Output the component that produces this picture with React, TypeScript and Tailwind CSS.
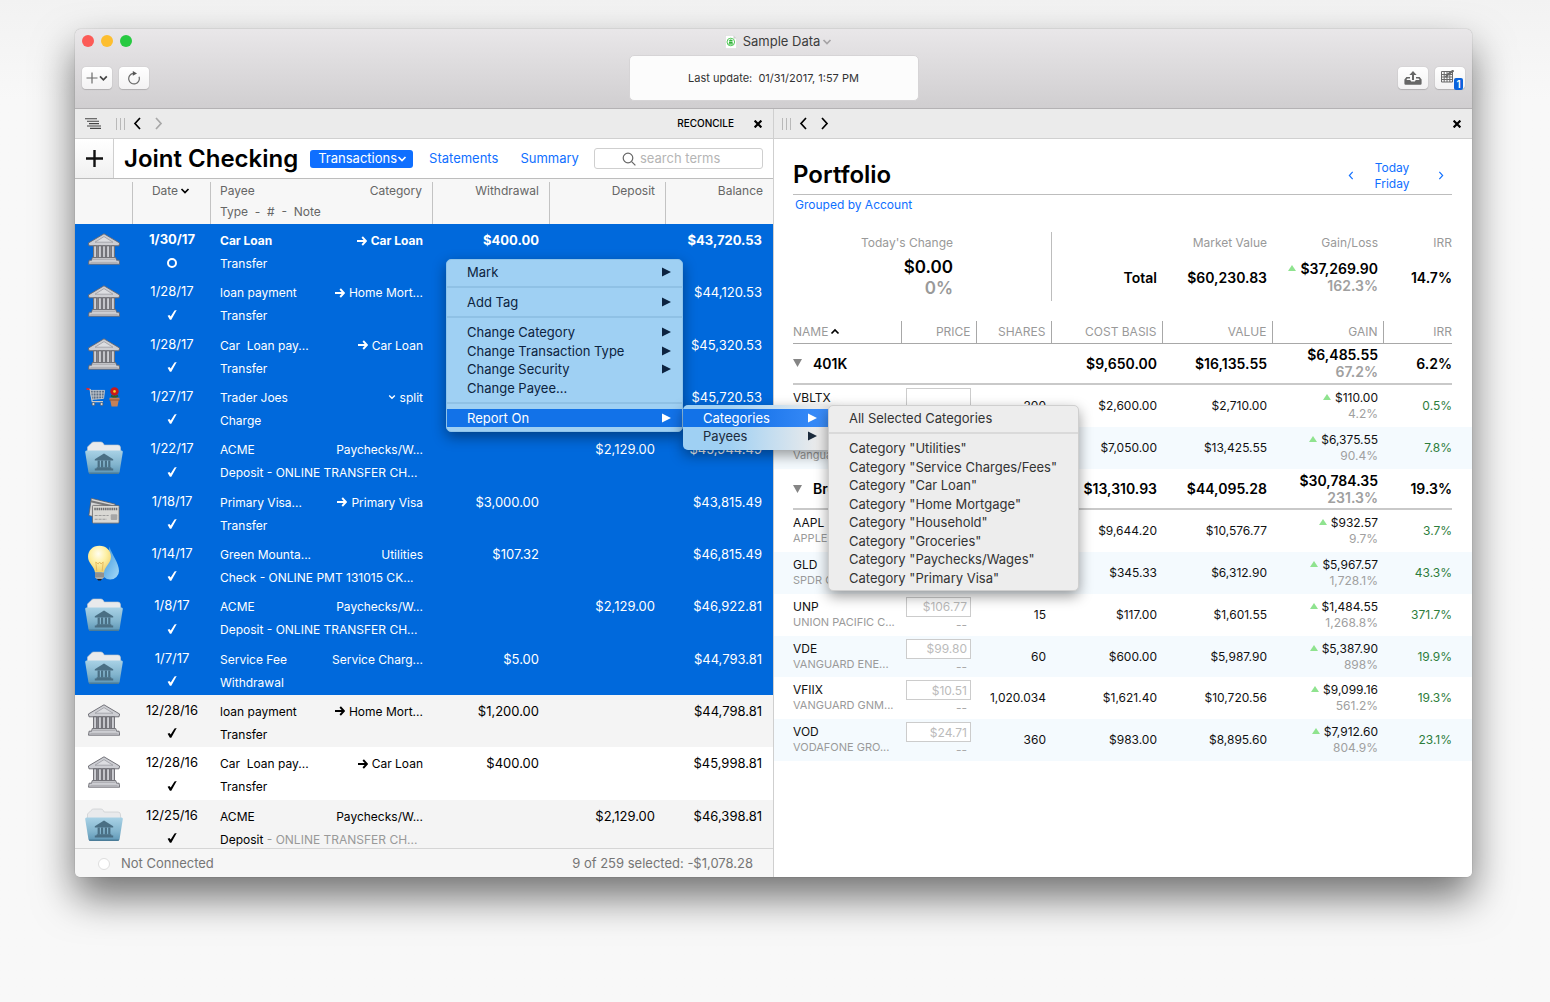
import type { ReactNode } from 'react';
import { clsx } from 'clsx';

type IconKind = 'bank' | 'shopping' | 'folder' | 'cards' | 'utility';

interface Transaction {
  icon: IconKind;
  date: string;
  open?: boolean;
  payee: string;
  category: string;
  link?: 'arrow' | 'split';
  type: string;
  note?: string;
  withdrawal?: string;
  deposit?: string;
  balance: string;
}

interface Holding {
  symbol: string;
  name: string;
  price: string;
  shares: string;
  cost: string;
  value: string;
  gain: string;
  percent: string;
  irr: string;
}

interface Group {
  name: string;
  cost: string;
  value: string;
  gain: string;
  percent: string;
  irr: string;
  holdings: Holding[];
}

const SELECTED_COUNT = 9;

const transactions: Transaction[] = [
  { icon: 'bank', date: '1/30/17', open: true, payee: 'Car Loan', category: 'Car Loan', link: 'arrow', type: 'Transfer', withdrawal: '$400.00', balance: '$43,720.53' },
  { icon: 'bank', date: '1/28/17', payee: 'loan payment', category: 'Home Mort...', link: 'arrow', type: 'Transfer', balance: '$44,120.53' },
  { icon: 'bank', date: '1/28/17', payee: 'Car  Loan pay...', category: 'Car Loan', link: 'arrow', type: 'Transfer', balance: '$45,320.53' },
  { icon: 'shopping', date: '1/27/17', payee: 'Trader Joes', category: 'split', link: 'split', type: 'Charge', balance: '$45,720.53' },
  { icon: 'folder', date: '1/22/17', payee: 'ACME', category: 'Paychecks/W...', type: 'Deposit', note: 'ONLINE TRANSFER CH...', deposit: '$2,129.00', balance: '$45,944.49' },
  { icon: 'cards', date: '1/18/17', payee: 'Primary Visa...', category: 'Primary Visa', link: 'arrow', type: 'Transfer', withdrawal: '$3,000.00', balance: '$43,815.49' },
  { icon: 'utility', date: '1/14/17', payee: 'Green Mounta...', category: 'Utilities', type: 'Check', note: 'ONLINE PMT 131015 CK...', withdrawal: '$107.32', balance: '$46,815.49' },
  { icon: 'folder', date: '1/8/17', payee: 'ACME', category: 'Paychecks/W...', type: 'Deposit', note: 'ONLINE TRANSFER CH...', deposit: '$2,129.00', balance: '$46,922.81' },
  { icon: 'folder', date: '1/7/17', payee: 'Service Fee', category: 'Service Charg...', type: 'Withdrawal', withdrawal: '$5.00', balance: '$44,793.81' },
  { icon: 'bank', date: '12/28/16', payee: 'loan payment', category: 'Home Mort...', link: 'arrow', type: 'Transfer', withdrawal: '$1,200.00', balance: '$44,798.81' },
  { icon: 'bank', date: '12/28/16', payee: 'Car  Loan pay...', category: 'Car Loan', link: 'arrow', type: 'Transfer', withdrawal: '$400.00', balance: '$45,998.81' },
  { icon: 'folder', date: '12/25/16', payee: 'ACME', category: 'Paychecks/W...', type: 'Deposit', note: 'ONLINE TRANSFER CH...', deposit: '$2,129.00', balance: '$46,398.81' },
];

const groups: Group[] = [
  {
    name: '401K', cost: '$9,650.00', value: '$16,135.55', gain: '$6,485.55', percent: '67.2%', irr: '6.2%',
    holdings: [
      { symbol: 'VBLTX', name: '', price: '', shares: '200', cost: '$2,600.00', value: '$2,710.00', gain: '$110.00', percent: '4.2%', irr: '0.5%' },
      { symbol: '', name: 'Vanguard', price: '', shares: '', cost: '$7,050.00', value: '$13,425.55', gain: '$6,375.55', percent: '90.4%', irr: '7.8%' },
    ],
  },
  {
    name: 'Brokerage', cost: '$13,310.93', value: '$44,095.28', gain: '$30,784.35', percent: '231.3%', irr: '19.3%',
    holdings: [
      { symbol: 'AAPL', name: 'APPLE', price: '', shares: '', cost: '$9,644.20', value: '$10,576.77', gain: '$932.57', percent: '9.7%', irr: '3.7%' },
      { symbol: 'GLD', name: 'SPDR G', price: '', shares: '', cost: '$345.33', value: '$6,312.90', gain: '$5,967.57', percent: '1,728.1%', irr: '43.3%' },
      { symbol: 'UNP', name: 'UNION PACIFIC C...', price: '$106.77', shares: '15', cost: '$117.00', value: '$1,601.55', gain: '$1,484.55', percent: '1,268.8%', irr: '371.7%' },
      { symbol: 'VDE', name: 'VANGUARD ENE...', price: '$99.80', shares: '60', cost: '$600.00', value: '$5,987.90', gain: '$5,387.90', percent: '898%', irr: '19.9%' },
      { symbol: 'VFIIX', name: 'VANGUARD GNM...', price: '$10.51', shares: '1,020.034', cost: '$1,621.40', value: '$10,720.56', gain: '$9,099.16', percent: '561.2%', irr: '19.3%' },
      { symbol: 'VOD', name: 'VODAFONE GRO...', price: '$24.71', shares: '360', cost: '$983.00', value: '$8,895.60', gain: '$7,912.60', percent: '804.9%', irr: '23.1%' },
    ],
  },
];

const reportCategories = [
  'Utilities', 'Service Charges/Fees', 'Car Loan', 'Home Mortgage',
  'Household', 'Groceries', 'Paychecks/Wages', 'Primary Visa',
];

/* ---------- icons ---------- */

function Chevron({ dir, className }: { dir: 'left' | 'right' | 'down' | 'up'; className?: string }) {
  const points = {
    left: '7,1 2,6.5 7,12',
    right: '2,1 7,6.5 2,12',
    down: '1.5,2 5,5.5 8.5,2',
    up: '1.5,5.5 5,2 8.5,5.5',
  }[dir];
  const vertical = dir === 'down' || dir === 'up';
  return (
    <svg viewBox={vertical ? '0 0 10 8' : '0 0 9 13'} className={className} fill="none" stroke="currentColor" strokeWidth="1.7">
      <polyline points={points} />
    </svg>
  );
}

function CloseIcon() {
  return (
    <svg viewBox="0 0 8 8" className="size-2" stroke="#000" strokeWidth="2.2">
      <path d="M0.6 0.6 7.4 7.4M7.4 0.6 0.6 7.4" />
    </svg>
  );
}

function Grip() {
  return (
    <svg viewBox="0 0 10 12" className="h-3 w-2.5" stroke="#b9b9b9" strokeWidth="1">
      <path d="M0.5 0v12M4.5 0v12M8.5 0v12" />
    </svg>
  );
}

function ArrowIcon() {
  return (
    <svg viewBox="0 0 10 10" className="h-2.5 w-2.5" fill="none" stroke="currentColor" strokeWidth="1.9">
      <path d="M0 5h8.6M5.2 1 9 5 5.2 9" />
    </svg>
  );
}

function CheckIcon() {
  return (
    <svg viewBox="0 0 10 10" className="size-2.5" fill="currentColor">
      <path d="M0.6 5.8 2.4 4.9 3.7 6.5 7.5 0.4 9.7 0 4.3 9.8 2.9 9.8Z" />
    </svg>
  );
}

function RingIcon() {
  return (
    <svg viewBox="0 0 10 10" className="size-2.5" fill="none" stroke="currentColor" strokeWidth="2">
      <circle cx="5" cy="5" r="4" />
    </svg>
  );
}

function BankIcon() {
  return (
    <svg viewBox="0 0 32 32" className="size-8">
      <path d="M5 12h22v13H5z" fill="#8b8c92" />
      <g fill="#cdced3" stroke="#66676d" strokeWidth="0.9" strokeLinejoin="round">
        <path d="M16 0.8 31.6 10 31 12.8H1L0.4 10Z" />
        <path d="M5.6 12.8h3v12h-3zM10.4 12.8h3v12h-3zM14.6 12.8h2.8v12h-2.8zM18.6 12.8h3v12h-3zM23.4 12.8h3v12h-3z" />
        <path d="M4.2 24.6h23.6l0.7 2.6h2.6l0.6 4H0.5l0.6-4h2.6z" />
      </g>
      <path d="M16 3.6 25 9.2H7Z" fill="#dcdde1" stroke="#9b9ca2" strokeWidth="0.8" />
      <path d="M2.4 29.4h27.2M5 26.4h22" stroke="#a4a5ab" strokeWidth="0.8" />
    </svg>
  );
}

function FolderIcon() {
  return (
    <svg viewBox="0 0 38 34" className="h-[34px] w-[38px]">
      <defs>
        <linearGradient id="folder-front" x1="0" y1="0" x2="0" y2="1">
          <stop offset="0" stopColor="#a9d2e6" />
          <stop offset="0.6" stopColor="#82b4cd" />
          <stop offset="1" stopColor="#5d96b5" />
        </linearGradient>
      </defs>
      <path d="M2.5 14V6L6 2.5Q7 1 8.6 1H16q1.6 0 2.4 1.6L19.2 4H33q2 0 2.4 2L36 14Z" fill="#e9eaec" stroke="#c3c6ca" strokeWidth="0.6" />
      <path d="M1.6 9.4H36.4Q38 9.4 37.8 11L34.6 31Q34.2 33 32.2 33H5.8Q3.8 33 3.4 31L0.2 11Q0 9.4 1.6 9.4Z" fill="url(#folder-front)" />
      <path d="M3.6 31.4h30.8Q34 33 32.2 33H5.8Q4 33 3.6 31.4Z" fill="#4b7c98" />
      <g fill="#4a6f84">
        <path d="M19 12.4 28.2 18.2V19.6H9.8V18.2Z" />
        <path d="M12.6 19.6h2.2v7h-2.2zM16 19.6h2.2v7H16zM19.8 19.6H22v7h-2.2zM23.2 19.6h2.2v7h-2.2z" />
        <path d="M11.8 26.2h14.4l0.4 1.4h1.6v1.8H9.8v-1.8h1.6z" />
      </g>
    </svg>
  );
}

function CardsIcon() {
  return (
    <svg viewBox="0 0 34 30" className="h-7 w-8">
      <g stroke="#58595c" strokeWidth="0.8">
        <path d="M3.4 1.4 29 7.6 24.4 26 0.8 19.8Z" fill="#d8d8d8" />
        <path d="M2.8 4.6 28.4 10.4" stroke="#77787a" strokeWidth="2.2" />
        <rect x="4.6" y="9" width="28.6" height="19" rx="1" fill="#d9d8d4" />
      </g>
      <path d="M6.6 12.8H31.2" stroke="#6e6f72" strokeWidth="2.6" strokeDasharray="1.6 0.7" />
      <path d="M7 19.8h15M7 23.8h13" stroke="#9c9c9c" strokeWidth="1.2" strokeDasharray="3.2 1" />
      <rect x="24.2" y="18.6" width="7" height="6" rx="1" fill="#a6a6a6" />
    </svg>
  );
}

function UtilityIcon() {
  return (
    <svg viewBox="0 0 34 36" className="h-9 w-[34px]">
      <defs>
        <radialGradient id="bulb" cx="0.45" cy="0.3" r="0.7">
          <stop offset="0" stopColor="#fffdf0" />
          <stop offset="0.5" stopColor="#fdf0a4" />
          <stop offset="1" stopColor="#f0cf6a" />
        </radialGradient>
        <linearGradient id="drop" x1="0" y1="0" x2="1" y2="1">
          <stop offset="0" stopColor="#2f8edb" />
          <stop offset="1" stopColor="#a9dcf8" />
        </linearGradient>
      </defs>
      <path d="M22.4 1.4C25 10 32 18 32 26A8.8 8.6 0 0 1 14.4 26C14.4 18 22 12 22.4 1.4Z" fill="url(#drop)" />
      <path d="M12.4 0.8C5.6 0.8 1 5.6 1 11.8 1 18.4 6.8 20.8 8 27.4H17C18.2 20.8 24 18.4 24 11.8 24 5.6 19.2 0.8 12.4 0.8Z" fill="url(#bulb)" />
      <path d="M9.8 26 8.8 17l2.4 2 1.4-2 1.4 2 2.2-2-1 9" fill="none" stroke="#e2b75c" strokeWidth="0.9" />
      <path d="M8 27.4h9v5.2l-2 1.6h-5l-2-1.6z" fill="#a9a9a6" />
      <path d="M8 29h9M8 31h9" stroke="#6f6f6c" strokeWidth="0.8" />
      <path d="M10 34h5l-1.2 1.4h-2.6z" fill="#1c1c1c" />
    </svg>
  );
}

function ShoppingIcon() {
  return (
    <svg viewBox="0 0 36 20" className="h-5 w-9">
      <path d="M1.4 2 4.2 2.6 6.2 14.6H17" fill="none" stroke="#c9c9c9" strokeWidth="1.2" />
      <path d="M4.4 3.4H18.6L17.6 11.4 5.8 12.4Z" fill="#5d6f86" stroke="#d2d2d2" strokeWidth="0.8" />
      <path d="M7.2 3.4v9M10 3.4v9M12.8 3.4v8.4M15.6 3.4v8.4M4.8 6h13.4M5.4 9h12.4" stroke="#d9dadb" strokeWidth="0.7" />
      <path d="M0.4 1.6 3.6 2.4" stroke="#e0262b" strokeWidth="1.8" />
      <circle cx="7.4" cy="17" r="1.5" fill="#d5d5d5" stroke="#4c4c4c" strokeWidth="0.6" />
      <circle cx="15.6" cy="17" r="1.5" fill="#d5d5d5" stroke="#4c4c4c" strokeWidth="0.6" />
      <path d="M28.5 7v5M25 8.6l3.5 2 3.5-2" stroke="#2c5f2a" strokeWidth="1.8" fill="none" />
      <circle cx="28.5" cy="4.4" r="4.2" fill="#c9191a" />
      <circle cx="28.5" cy="4.4" r="1.3" fill="#f7cf2e" />
      <path d="M23.5 10.8h10v2.4h-0.8l-1.2 6.2h-6l-1.2-6.2h-0.8z" fill="#c58157" />
      <path d="M23.5 13h10" stroke="#8d4a25" strokeWidth="0.8" />
    </svg>
  );
}

function RowIcon({ kind }: { kind: IconKind }) {
  if (kind === 'folder') return <FolderIcon />;
  if (kind === 'cards') return <CardsIcon />;
  if (kind === 'utility') return <UtilityIcon />;
  if (kind === 'shopping') return <ShoppingIcon />;
  return <BankIcon />;
}

/* ---------- title bar ---------- */

function ToolButton({ label, children }: { label: string; children: ReactNode }) {
  return (
    <button
      type="button"
      aria-label={label}
      className="flex h-[22px] w-[30px] items-center justify-center rounded-[4px] bg-gradient-to-b from-white to-[#f3f2f3] text-[#6b6b6b] shadow-[0_0_1px_rgba(0,0,0,0.25),0_1px_1px_rgba(0,0,0,0.15)]"
    >
      {children}
    </button>
  );
}

function TitleBar() {
  return (
    <header className="grid h-20 shrink-0 grid-cols-[1fr_290px_1fr] rounded-t-[6px] border-b border-[#b4b2b4] bg-gradient-to-b from-[#e9e7e9] to-[#d0ced0]">
      <div className="flex flex-col px-[7px]">
        <div className="flex h-6 items-center gap-[7px]">
          <span className="size-3 rounded-full bg-[#fc5b57]" />
          <span className="size-3 rounded-full bg-[#fdbe2f]" />
          <span className="size-3 rounded-full bg-[#27ca41]" />
        </div>
        <div className="flex gap-[7px] pt-[14px]">
          <ToolButton label="Add">
            <svg viewBox="0 0 22 12" className="h-3 w-[22px]" fill="none" stroke="currentColor">
              <path d="M0.5 6h11M6 0.5v11" strokeWidth="1.2" />
              <path d="M14 4.4 17.4 7.8 20.8 4.4" stroke="#444" strokeWidth="1.7" />
            </svg>
          </ToolButton>
          <ToolButton label="Refresh">
            <svg viewBox="0 0 14 14" className="size-[14px]" fill="none" stroke="currentColor" strokeWidth="1.2">
              <path d="M12 5.8A5.3 5.3 0 1 1 6.2 2.4" />
              <path d="M5.8 0v4.8L10 2.4Z" fill="#555" stroke="none" />
            </svg>
          </ToolButton>
        </div>
      </div>

      <div className="flex flex-col">
        <div className="flex h-[26px] items-center justify-center gap-1.5 pl-2.5 text-[13px] text-[#3c3c3c]">
          <svg viewBox="0 0 12 14" className="h-[14px] w-3">
            <path d="M0.5 0.5H8.5L11.5 3.5V13.5H0.5Z" fill="#fff" stroke="#dcdcdc" strokeWidth="0.6" />
            <path d="M8.5 0.5v3h3" fill="#ccc" />
            <circle cx="5.8" cy="7" r="3.8" fill="none" stroke="#55c95a" />
            <path d="M5.8 4.2 8.2 6H3.4ZM4 6.4h3.6v1.8H4zM3.4 8.4h4.8v1H3.4z" fill="#2fb437" />
          </svg>
          <span>Sample Data</span>
          <Chevron dir="down" className="-ml-1 h-2 w-2.5 text-[#a5a3a5]" />
        </div>
        <p className="flex h-[46px] items-center justify-center rounded-[5px] border border-[#d6d4d6] bg-[#fcfcfc] text-[11px] text-[#333]">
          Last update:&nbsp; 01/31/2017, 1:57 PM
        </p>
      </div>

      <div className="flex items-start justify-end gap-[7px] pt-[38px] pr-[7px]">
        <ToolButton label="Share">
          <svg viewBox="0 0 18 14" className="h-[14px] w-[18px]" fill="#666">
            <path d="M0.4 8.6 2.4 6H6v1.4H3.4L2.4 9h3.8l1 1.4h3.6l1-1.4h3.8l-1-1.6H12V6h3.6l2 2.6v4q0 1.2-1.2 1.2H1.6Q0.4 13.8 0.4 12.6Z" />
            <path d="M8 9V4H5.4L9 0l3.6 4H10v5z" />
          </svg>
        </ToolButton>
        <ToolButton label="Review 1 item">
          <span className="flex items-end pl-1">
            <svg viewBox="0 0 13 13" className="mb-[3px] size-[13px]" fill="none" stroke="#6a6a6a">
              <path d="M0.5 1.5h11v10.5H0.5zM0.5 4.5h11M0.5 7h11M0.5 9.5h11M3.2 1.5V12M6 1.5V12M8.8 1.5V12" strokeWidth="1" />
              <path d="M4.6 7.4 7 4.4 12.6 0.4" strokeWidth="2.2" />
            </svg>
            <span className="-mb-1 flex h-3 w-[9px] items-center justify-center rounded-[2px] bg-[#0a62dc] text-[10px] font-semibold text-white">1</span>
          </span>
        </ToolButton>
      </div>
    </header>
  );
}

/* ---------- register ---------- */

function TransactionRow({ tx, index }: { tx: Transaction; index: number }) {
  const selected = index < SELECTED_COUNT;
  const amount = 'align-top pt-[5px] pr-[11px] text-right leading-[23px]';
  return (
    <tr
      className={clsx(
        selected && 'bg-[#0069dc] text-white',
        !selected && (index % 2 ? 'bg-[#f4f4f4]' : 'bg-white'),
        index === 0 && 'font-bold',
      )}
    >
      <td className="p-0 align-top">
        <div className={clsx('flex h-[50px] justify-center', tx.icon === 'shopping' ? 'pt-1.5' : 'items-center')}>
          <RowIcon kind={tx.icon} />
        </div>
      </td>
      <td className="pt-1 text-center align-top leading-[23px]">
        {tx.date}
        <div className="flex h-[23px] items-center justify-center">{tx.open ? <RingIcon /> : <CheckIcon />}</div>
      </td>
      <td className="pt-[5px] pr-2.5 pl-[9px] align-top text-[12px] leading-[23px]">
        <div className="flex justify-between whitespace-pre">
          <span>{tx.payee}</span>
          <span className="flex items-center gap-1">
            {tx.link === 'arrow' && <ArrowIcon />}
            {tx.link === 'split' && <Chevron dir="down" className="h-2 w-2" />}
            {tx.category}
          </span>
        </div>
        <div className="font-normal whitespace-nowrap">
          {tx.type}
          {tx.note && <span className={clsx(!selected && 'text-[#999]')}> - {tx.note}</span>}
        </div>
      </td>
      <td className={amount}>{tx.withdrawal}</td>
      <td className={amount}>{tx.deposit}</td>
      <td className={amount}>{tx.balance}</td>
    </tr>
  );
}

function HeadCell({ children, className }: { children?: ReactNode; className?: string }) {
  return (
    <th scope="col" className="h-[45px] bg-[#f7f7f7] p-0 pt-[3px] font-normal">
      <div className={clsx('h-[42px] border-[#c3c3c3] pr-2.5 pl-[9px] leading-[17px]', className)}>{children}</div>
    </th>
  );
}

function Register() {
  return (
    <section className="flex min-w-0 flex-1 flex-col border-r border-[#cfcfcf]">
      <div className="flex h-[30px] shrink-0 items-center border-b border-[#d0d0d0] bg-[#ebebeb] pr-[11px] pl-2.5">
        <button type="button" aria-label="Toggle sidebar">
          <svg viewBox="0 0 16 11" className="h-[11px] w-4" stroke="#444" strokeWidth="1.1">
            <path d="M0 0.8h12M2 3.2h12M4 5.6h10M2 8h14M5 10.4h11" />
          </svg>
        </button>
        <span className="pl-[15px]"><Grip /></span>
        <button type="button" aria-label="Back" className="pl-[7px]"><Chevron dir="left" className="h-[13px] w-[9px] text-black" /></button>
        <button type="button" aria-label="Forward" className="pl-3"><Chevron dir="right" className="h-[13px] w-[9px] text-[#a8a8a8]" /></button>
        <button type="button" className="ml-auto text-[10px] font-medium text-black">RECONCILE</button>
        <button type="button" aria-label="Close pane" className="pl-5"><CloseIcon /></button>
      </div>

      <div className="flex h-10 shrink-0 items-center border-b border-[#bdbdbd] bg-white pr-2.5">
        <button type="button" aria-label="New transaction" className="flex h-full w-[39px] items-center justify-center border-r border-[#cfcfcf] bg-gradient-to-b from-white to-[#f0f0f0]">
          <svg viewBox="0 0 17 17" className="size-[17px]" stroke="#111" strokeWidth="2.4">
            <path d="M0 8.5h17M8.5 0v17" />
          </svg>
        </button>
        <h1 className="pl-2.5 text-[24px] font-semibold text-black">Joint Checking</h1>
        <nav className="flex flex-1 items-center text-[#0f6fff]">
          <button type="button" className="ml-3 flex h-[18px] items-center rounded-[3px] bg-[#0f6fff] pr-1.5 pl-2 text-white">
            Transactions
            <Chevron dir="down" className="h-2 w-2.5" />
          </button>
          <a href="#statements" className="pl-4">Statements</a>
          <a href="#summary" className="pl-[22px]">Summary</a>
        </nav>
        <label className="flex h-[21px] w-[169px] items-center gap-1 rounded-[3px] border border-[#cfcfcf] pl-[27px]">
          <svg viewBox="0 0 14 14" className="size-[14px] shrink-0" fill="none" stroke="#666" strokeWidth="1.2">
            <circle cx="6" cy="6" r="4.8" />
            <path d="M9.6 9.6 13.4 13.4" />
          </svg>
          <input type="search" aria-label="Search" placeholder="search terms" className="w-full min-w-0 bg-transparent outline-none placeholder:text-[#b5b5b5]" />
        </label>
      </div>

      <div className="min-h-0 flex-1 overflow-hidden">
        <table className="h-[673px] w-full table-fixed text-black">
          <colgroup>
            <col className="w-[58px]" />
            <col className="w-[78px]" />
            <col />
            <col className="w-[117px]" />
            <col className="w-[116px]" />
            <col className="w-[107px]" />
          </colgroup>
          <thead className="text-[12px] text-[#666]">
            <tr className="h-[45px]">
              <HeadCell className="border-r" />
              <HeadCell className="border-r text-center">
                <span className="inline-flex items-center">Date<Chevron dir="down" className="ml-0.5 h-2 w-2.5 text-black" /></span>
              </HeadCell>
              <HeadCell className="border-r text-left">
                <span className="flex justify-between"><span>Payee</span><span>Category</span></span>
                <span className="block pt-1 whitespace-pre">Type  -  #  -  Note</span>
              </HeadCell>
              <HeadCell className="border-r text-right">Withdrawal</HeadCell>
              <HeadCell className="border-r text-right">Deposit</HeadCell>
              <HeadCell className="text-right">Balance</HeadCell>
            </tr>
          </thead>
          <tbody className="text-[13px]">
            {transactions.map((tx, i) => (
              <TransactionRow key={i} tx={tx} index={i} />
            ))}
          </tbody>
        </table>
      </div>

      <footer className="flex h-[29px] shrink-0 items-center rounded-bl-[5px] border-t border-[#d5d5d5] bg-[#f6f6f6] pt-px pr-5 pl-[23px] text-[#757575]">
        <span className="size-3 rounded-full border border-[#dedede] bg-white" />
        <span className="pl-[11px]">Not Connected</span>
        <span className="ml-auto">9 of 259 selected: -$1,078.28</span>
      </footer>
    </section>
  );
}

/* ---------- portfolio ---------- */

function UpTriangle() {
  return (
    <svg viewBox="0 0 8 6" className="mb-0.5 h-1.5 w-2" fill="#8fe38f">
      <path d="M4 0 8 6H0z" />
    </svg>
  );
}

function GroupRow({ group }: { group: Group }) {
  const cell = 'border-b-2 border-[#c9c9c9] p-0 pr-[5px]';
  return (
    <tr className="text-right text-[14px] font-semibold text-black">
      <td />
      <td className={clsx(cell, 'text-left')} colSpan={2}>
        <button type="button" aria-expanded="true" className="flex h-[39px] items-center gap-[11px]">
          <svg viewBox="0 0 9 8" className="h-2 w-[9px]" fill="#858585"><path d="M0 0h9L4.5 8z" /></svg>
          {group.name}
        </button>
      </td>
      <td className={cell} />
      <td className={cell}>{group.cost}</td>
      <td className={cell}>{group.value}</td>
      <td className={clsx(cell, 'leading-[17px]')}>
        {group.gain}
        <div className="text-[#a0a0a0]">{group.percent}</div>
      </td>
      <td className="border-b-2 border-[#c9c9c9] p-0">{group.irr}</td>
      <td />
    </tr>
  );
}

function HoldingRow({ item, shaded }: { item: Holding; shaded: boolean }) {
  return (
    <tr className={clsx('text-right text-[12px] leading-4 text-[#111]', shaded && 'bg-[#f4fafe]')}>
      <td />
      <td className="p-0 text-left align-top">
        <div className="h-[41px] pt-[5px] whitespace-nowrap">
          {item.symbol || '\u00a0'}
          <div className="text-[11px] leading-[15px] text-[#9a9a9a]">{item.name}</div>
        </div>
      </td>
      <td className="p-0 pr-[5px] align-top text-[#aaa]">
        <input
          aria-label={`${item.symbol} price`}
          defaultValue={item.price}
          className="mt-[3px] ml-auto block h-5 w-[65px] border border-[#ccc] bg-white pr-[3px] text-right text-[#bbb] outline-none"
        />
        <div className="pr-1">--</div>
      </td>
      <td className="p-0 pr-[5px]">{item.shares}</td>
      <td className="p-0 pr-[5px]">{item.cost}</td>
      <td className="p-0 pr-[5px]">{item.value}</td>
      <td className="p-0 pr-[5px] align-top">
        <div className="flex items-center justify-end gap-1 pt-[5px]"><UpTriangle />{item.gain}</div>
        <div className="leading-[15px] text-[#a0a0a0]">{item.percent}</div>
      </td>
      <td className="p-0 text-[#2d7d3c]">{item.irr}</td>
      <td />
    </tr>
  );
}

function Portfolio() {
  const head = 'border-b border-[#a8a8a8] p-0 pr-[5px] font-normal';
  return (
    <section className="flex min-w-0 flex-1 flex-col rounded-br-[5px] bg-white">
      <div className="flex h-[30px] shrink-0 items-center border-b border-[#d0d0d0] bg-[#ebebeb] pr-[11px] pl-2">
        <Grip />
        <button type="button" aria-label="Back" className="pl-[7px]"><Chevron dir="left" className="h-[13px] w-[9px] text-black" /></button>
        <button type="button" aria-label="Forward" className="pl-3"><Chevron dir="right" className="h-[13px] w-[9px] text-black" /></button>
        <button type="button" aria-label="Close pane" className="ml-auto"><CloseIcon /></button>
      </div>

      <div className="pr-5 pl-[19px]">
        <div className="flex h-14 items-end border-b border-[#bdbdbd] text-[12px] text-[#0f6fff]">
          <h2 className="flex-1 pb-[3px] text-[24px] leading-8 font-semibold text-black">Portfolio</h2>
          <button type="button" aria-label="Previous day" className="pb-[14px]"><Chevron dir="left" className="h-[9px] w-1.5" /></button>
          <div className="w-[84px] pr-2 pb-0.5 text-center leading-4">
            Today
            <br />
            Friday
          </div>
          <button type="button" aria-label="Next day" className="pr-2 pb-[14px]"><Chevron dir="right" className="h-[9px] w-1.5" /></button>
        </div>
        <a href="#grouping" className="block pl-0.5 text-[12px] leading-5 text-[#0f6fff]">Grouped by Account</a>

        <dl className="mt-[17px] flex h-[69px] text-right text-[14px] font-semibold text-black">
          <div className="flex-1 border-r border-[#bdbdbd] pr-[98px]">
            <dt className="text-[12px] leading-[22px] font-normal text-[#999]">Today&apos;s Change</dt>
            <dd className="pt-0.5 text-[17px] leading-[22px]">$0.00</dd>
            <dd className="text-[17px] leading-5 text-[#999]">0%</dd>
          </div>
          <div className="w-[105px] pt-[34px] leading-[23px]">Total</div>
          <div className="w-[110px]">
            <dt className="text-[12px] leading-[22px] font-normal text-[#999]">Market Value</dt>
            <dd className="pt-3 leading-[23px]">$60,230.83</dd>
          </div>
          <div className="w-[111px]">
            <dt className="text-[12px] leading-[22px] font-normal text-[#999]">Gain/Loss</dt>
            <dd className="flex items-center justify-end gap-1 pt-1.5 leading-[17px]"><UpTriangle />$37,269.90</dd>
            <dd className="leading-[17px] text-[#a0a0a0]">162.3%</dd>
          </div>
          <div className="w-[74px]">
            <dt className="text-[12px] leading-[22px] font-normal text-[#999]">IRR</dt>
            <dd className="pt-3 leading-[23px]">14.7%</dd>
          </div>
        </dl>
      </div>

      <table className="mt-5 h-[440px] w-full table-fixed">
        <colgroup>
          <col className="w-[19px]" />
          <col />
          <col className="w-[75px]" />
          <col className="w-[75px]" />
          <col className="w-[111px]" />
          <col className="w-[110px]" />
          <col className="w-[111px]" />
          <col className="w-[69px]" />
          <col className="w-5" />
        </colgroup>
        <thead className="text-right text-[12px] text-[#999]">
          <tr className="h-[22px]">
            <td />
            <th scope="col" className={clsx(head, 'border-r text-left')}>
              <span className="inline-flex items-center">NAME<Chevron dir="up" className="ml-0.5 h-2 w-2.5 text-black" /></span>
            </th>
            {['PRICE', 'SHARES', 'COST BASIS', 'VALUE', 'GAIN'].map((label) => (
              <th key={label} scope="col" className={clsx(head, 'border-r')}>{label}</th>
            ))}
            <th scope="col" className="border-b border-[#a8a8a8] p-0 font-normal">IRR</th>
            <td />
          </tr>
        </thead>
        {groups.map((group) => (
          <tbody key={group.name}>
            <GroupRow group={group} />
            {group.holdings.map((item, i) => (
              <HoldingRow key={i} item={item} shaded={i % 2 === 1} />
            ))}
          </tbody>
        ))}
      </table>
    </section>
  );
}

/* ---------- context menus ---------- */

function MenuItem({ children, submenu, active, wide }: { children: ReactNode; submenu?: boolean; active?: boolean; wide?: boolean }) {
  return (
    <button
      type="button"
      role="menuitem"
      className={clsx(
        'flex min-h-[18px] w-full items-center justify-between pl-5 leading-[18px] whitespace-nowrap',
        wide ? 'pr-4' : 'pr-[11px]',
        active && 'text-white',
      )}
    >
      {children}
      {submenu && (
        <svg viewBox="0 0 9 10" className="h-2.5 w-[9px]" fill="currentColor"><path d="M0 0.5 9 5 0 9.5z" /></svg>
      )}
    </button>
  );
}

function Separator({ className }: { className: string }) {
  return (
    <div role="separator" className="flex h-3 items-center">
      <span className={clsx('h-0.5 w-full', className)} />
    </div>
  );
}

function ContextMenus() {
  return (
    <div className="text-[13px]">
      <div role="menu" className="absolute top-[230px] left-[371px] w-[237px] rounded-[5px] border border-[#8ec3ea] bg-[#9fd0f3] pt-[3px] pb-1 text-[#0c2340] shadow-[0_5px_14px_rgba(0,0,0,0.4)]">
        <MenuItem submenu>Mark</MenuItem>
        <Separator className="bg-[#8fc1e5]" />
        <MenuItem submenu>Add Tag</MenuItem>
        <Separator className="bg-[#8fc1e5]" />
        <div className="grid h-[74px]">
          <MenuItem submenu>Change Category</MenuItem>
          <MenuItem submenu>Change Transaction Type</MenuItem>
          <MenuItem submenu>Change Security</MenuItem>
          <MenuItem>Change Payee...</MenuItem>
        </div>
        <Separator className="bg-[#8fc1e5]" />
        <div className="bg-[#1272e8]">
          <MenuItem submenu active>Report On</MenuItem>
        </div>
      </div>

      <div role="menu" className="absolute top-[376px] left-[608px] w-[150px] rounded-[5px] bg-gradient-to-r from-[#9fd0f3] from-30% to-[#ebebeb] to-90% pt-1 pb-[5px] text-[#1c2b3c] shadow-[0_5px_14px_rgba(0,0,0,0.4)]">
        <div className="bg-gradient-to-r from-[#1272e8] from-40% to-[#3d8ffb]">
          <MenuItem submenu active wide>Categories</MenuItem>
        </div>
        <MenuItem submenu wide>Payees</MenuItem>
      </div>

      <div role="menu" className="absolute top-[376px] left-[753px] w-[251px] rounded-[5px] border border-[#cfcfcf] bg-[#ededed] py-[3px] text-[#333] shadow-[0_5px_14px_rgba(0,0,0,0.4)]">
        <MenuItem>All Selected Categories</MenuItem>
        <Separator className="bg-[#dadada]" />
        <div className="grid h-[148px]">
          {reportCategories.map((name) => (
            <MenuItem key={name}>Category "{name}"</MenuItem>
          ))}
        </div>
      </div>
    </div>
  );
}

export default function App() {
  return (
    <div className="flex h-screen flex-col bg-gradient-to-b from-[#f2f2f2] to-[#f8f8f8] to-10% pt-[29px] pr-[78px] pb-[125px] pl-[75px] font-['Inter','Liberation_Sans',sans-serif] text-[13px]">
      <main className="relative flex min-h-0 flex-1 flex-col rounded-[6px] shadow-[0_0_1px_rgba(0,0,0,0.5),0_20px_40px_rgba(0,0,0,0.55)]">
        <TitleBar />
        <div className="flex min-h-0 flex-1">
          <Register />
          <Portfolio />
        </div>
        <ContextMenus />
      </main>
    </div>
  );
}
